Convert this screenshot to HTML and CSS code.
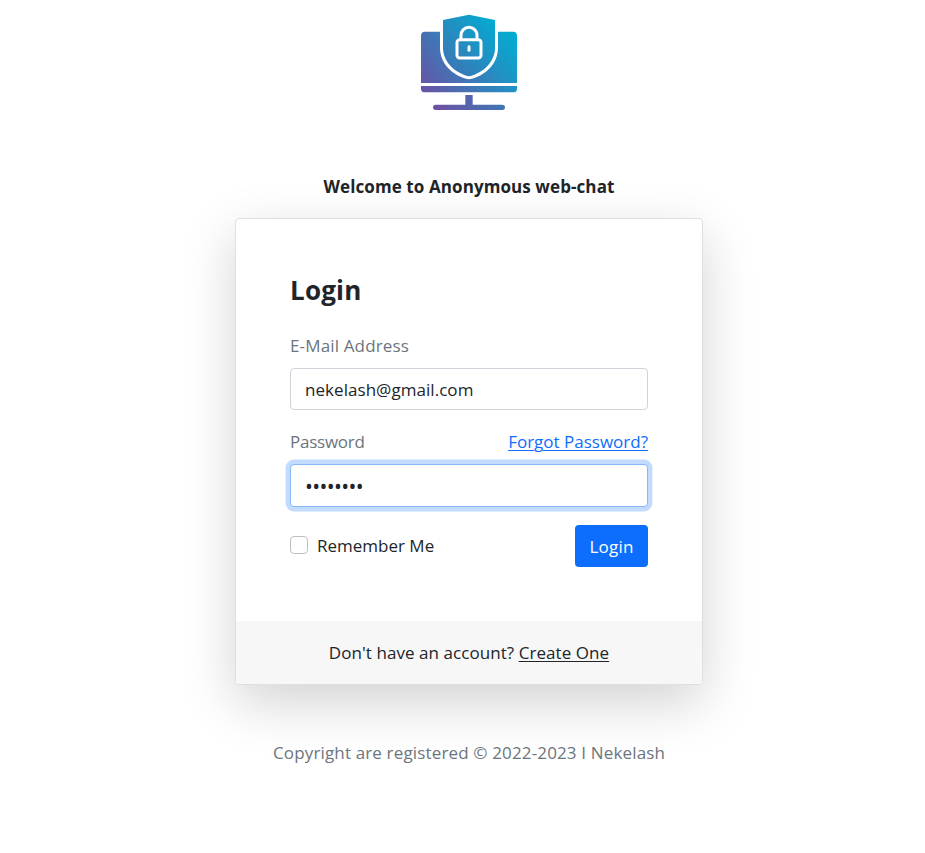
FILE: index.html
```html
<!DOCTYPE html>
<html lang="en">
<head>
<meta charset="utf-8">
<title>Login</title>
<link rel="stylesheet" href="styles.css">
</head>
<body>
<main class="page">
  <svg class="logo" viewBox="0 0 360 345" aria-hidden="true">
    <defs>
      <linearGradient id="brand" gradientUnits="userSpaceOnUse" x1="45" y1="260" x2="290" y2="75">
        <stop offset="0" stop-color="#6754a5"/>
        <stop offset="1" stop-color="#05aad0"/>
      </linearGradient>
      <linearGradient id="shield" gradientUnits="userSpaceOnUse" x1="50" y1="230" x2="250" y2="45">
        <stop offset="0" stop-color="#5062aa"/>
        <stop offset="1" stop-color="#05aad0"/>
      </linearGradient>
      <linearGradient id="base" gradientUnits="userSpaceOnUse" x1="72" y1="310" x2="288" y2="250">
        <stop offset="0" stop-color="#7050a2"/>
        <stop offset="1" stop-color="#3a7ab6"/>
      </linearGradient>
    </defs>
    <path fill="url(#brand)" d="M48 80H312Q324 80 324 92V234H36V92Q36 80 48 80Z"/>
    <path fill="url(#brand)" d="M36 243H324V251Q324 262 312 262H48Q36 262 36 251Z"/>
    <path fill="url(#base)" d="M169 270H191V299H280Q288 299 288 307Q288 315 280 315H80Q72 315 72 307Q72 299 80 299H169Z"/>
    <path fill="#fff" d="M93 38H267V128C267 175 231 212 180 223C129 212 93 175 93 128Z"/>
    <path fill="url(#shield)" d="M102 45L180 29L258 45V128C258 170 224 203 180 214C136 203 102 170 102 128Z"/>
    <g fill="none" stroke="#fff" stroke-width="9">
      <rect x="144" y="104" width="72" height="55" rx="8"/>
      <path d="M156 104V91A24 24 0 0 1 204 91V104"/>
      <path d="M180 125V136" stroke-linecap="round"/>
    </g>
  </svg>
  <h1 class="welcome">Welcome to Anonymous web-chat</h1>
  <section class="card">
    <form class="card-body">
      <h2 class="title">Login</h2>
      <label class="label email-label" for="email">E-Mail Address</label>
      <input class="control email" id="email" type="text" value="nekelash@gmail.com">
      <div class="row">
        <label class="label password-label">Password</label>
        <a class="forgot" href="#">Forgot Password?</a>
      </div>
      <div class="control focused"><span class="dots">••••••••</span></div>
      <div class="actions">
        <label class="remember"><input class="check" type="checkbox"><span>Remember Me</span></label>
        <button class="submit" type="button">Login</button>
      </div>
    </form>
    <div class="card-footer"><span>Don't have an account? <a class="create" href="#">Create One</a></span></div>
  </section>
  <footer class="copyright">Copyright are registered © 2022-2023 I Nekelash</footer>
</main>
</body>
</html>
```
FILE: styles.css
```css
* { box-sizing: border-box; }
html { overflow: hidden; }
body {
  margin: 0;
  background: #fff;
  color: #212529;
  font: 400 17px/26px "Open Sans", "Noto Sans", sans-serif;
}
.page {
  width: 938px;
  height: 853px;
  padding-top: 5px;
  display: flex;
  flex-direction: column;
  align-items: center;
}
.logo { width: 120px; height: 115px; flex: none; }
.welcome {
  margin: 54px 0 18px;
  font-size: 17px;
  line-height: 26px;
  font-weight: 700;
  letter-spacing: .09px;
}
.card {
  width: 468px;
  height: 467px;
  flex: none;
  display: flex;
  flex-direction: column;
  border: 1px solid #dfdfdf;
  border-radius: 4px;
  background: #fff;
  box-shadow: 0 17.6px 52.8px rgba(0, 0, 0, .175);
}
.card-body {
  flex: 1;
  padding: 54px 54px 0;
  display: flex;
  flex-direction: column;
}
.title {
  margin: 0;
  height: 34px;
  font-size: 26px;
  line-height: 34px;
  font-weight: 700;
  letter-spacing: .2px;
}
.label { color: #6c757d; }
.email-label { margin: 26px 0 9px; height: 26px; letter-spacing: .15px; }
.password-label { letter-spacing: -.25px; }
.control {
  width: 358px;
  height: 42px;
  padding: 0 14px;
  border: 1px solid #ced4da;
  border-radius: 4px;
  background: #fff;
  color: #212529;
  font: inherit;
}
.email { letter-spacing: .05px; }
.row {
  margin: 19px 0 9px;
  height: 26px;
  display: flex;
  justify-content: space-between;
}
.forgot { color: #0d6efd; }
.forgot, .create { text-decoration-thickness: 1px; text-underline-offset: 2px; }
.focused {
  height: 43px;
  border-color: #86b7fe;
  box-shadow: 0 0 0 4.4px rgba(13, 110, 253, .25);
  display: flex;
  align-items: center;
}
.dots { font-size: 21px; letter-spacing: -.63px; }
.actions {
  margin-top: 18px;
  height: 42px;
  display: flex;
  justify-content: space-between;
}
.remember { display: flex; height: 42px; align-items: center; gap: 9px; }
.check {
  appearance: none;
  margin: 0 0 2px;
  width: 18px;
  height: 18px;
  border: 1px solid #bfbfbf;
  border-radius: 4px;
  background: #fff;
}
.submit {
  width: 73px;
  height: 42px;
  padding: 1px 0 0;
  border: 0;
  border-radius: 4px;
  background: #0d6efd;
  color: #fff;
  font: inherit;
  letter-spacing: .2px;
}
.card-footer {
  height: 63px;
  display: flex;
  align-items: center;
  justify-content: center;
  background: #f7f7f7;
  border-radius: 0 0 3px 3px;
  letter-spacing: .06px;
}
.create { color: #212529; }
.copyright { margin-top: 55px; color: #6c757d; letter-spacing: .15px; }
```
